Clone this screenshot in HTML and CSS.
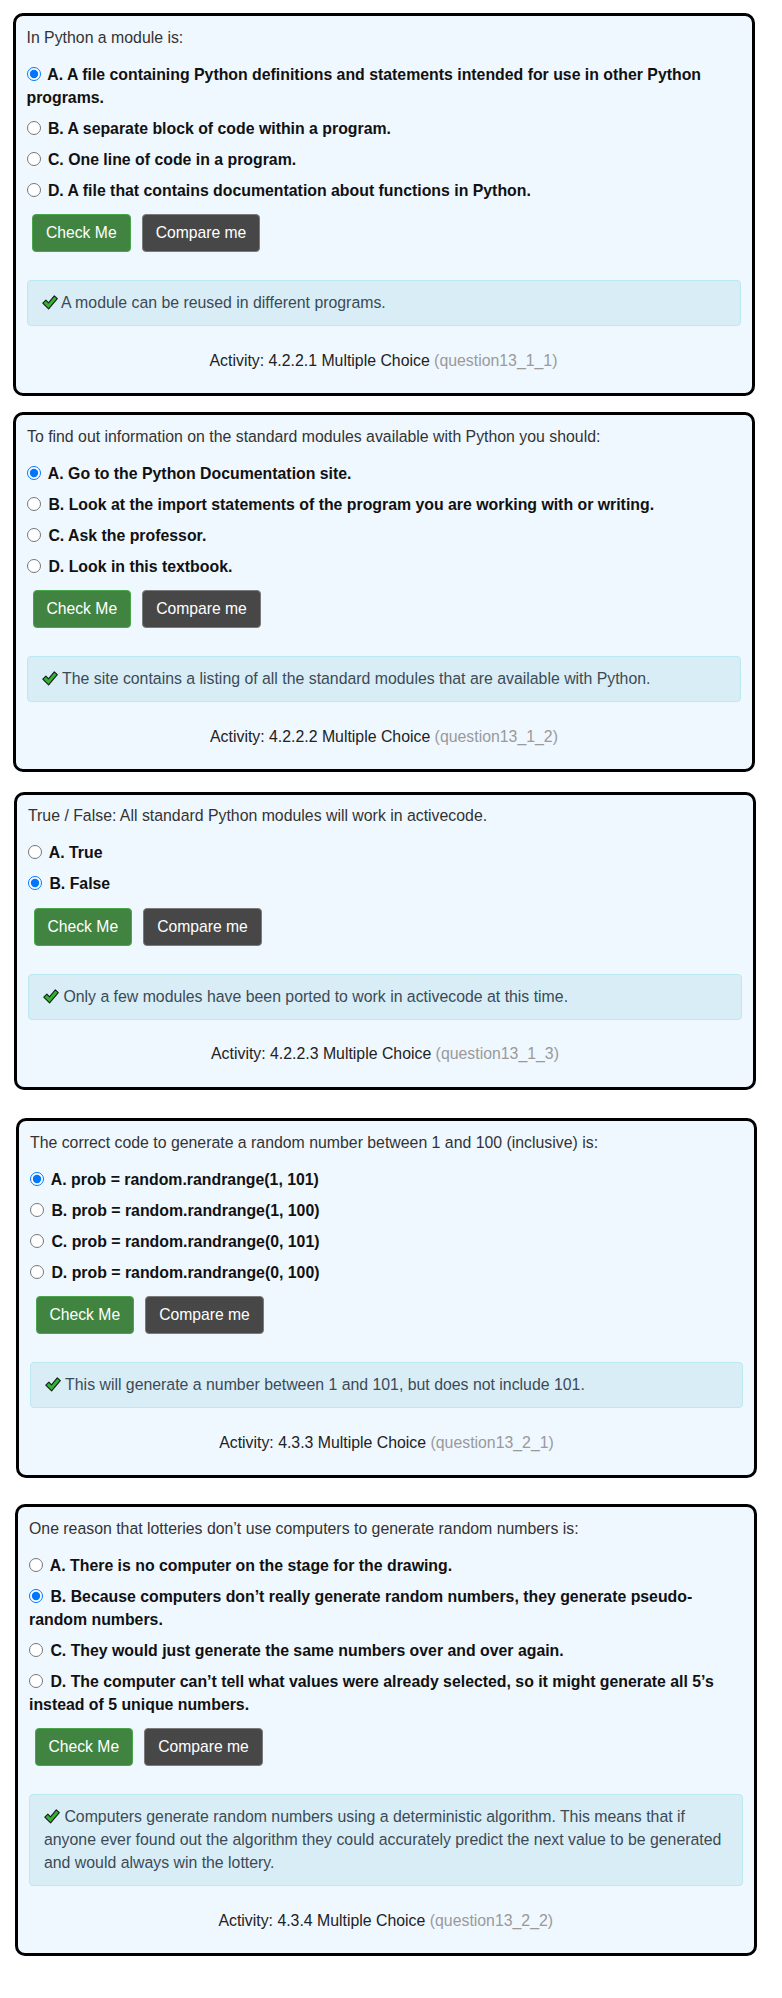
FILE: index.html
```html
<!DOCTYPE html>
<html lang="en">
<head>
<meta charset="utf-8">
<title>Multiple Choice</title>
<link rel="stylesheet" href="styles.css">
</head>
<body>
<main class="page">

<section class="mc mc-1">
  <p class="question">In Python a module is:</p>
  <div class="options">
    <label class="option"><input type="radio" name="q1" checked> A. A file containing Python definitions and statements intended for use in other Python programs.</label>
    <label class="option"><input type="radio" name="q1"> B. A separate block of code within a program.</label>
    <label class="option"><input type="radio" name="q1"> C. One line of code in a program.</label>
    <label class="option"><input type="radio" name="q1"> D. A file that contains documentation about functions in Python.</label>
  </div>
  <div class="actions">
    <button class="btn btn-check">Check Me</button>
    <button class="btn btn-compare">Compare me</button>
  </div>
  <div class="feedback"><svg class="tick" viewBox="0 0 16 15" width="16" height="15"><path d="M0.8 8.2 L3.9 5.2 L6.5 7.8 L12.3 0.9 L15.3 3.6 L6.6 13.9 Z" fill="#2fb52f" stroke="#1a1a1a" stroke-width="1.1" stroke-linejoin="round"/></svg> A module can be reused in different programs.</div>
  <p class="activity">Activity: 4.2.2.1 Multiple Choice <span class="qid">(question13_1_1)</span></p>
</section>

<section class="mc mc-2">
  <p class="question">To find out information on the standard modules available with Python you should:</p>
  <div class="options">
    <label class="option"><input type="radio" name="q2" checked> A. Go to the Python Documentation site.</label>
    <label class="option"><input type="radio" name="q2"> B. Look at the import statements of the program you are working with or writing.</label>
    <label class="option"><input type="radio" name="q2"> C. Ask the professor.</label>
    <label class="option"><input type="radio" name="q2"> D. Look in this textbook.</label>
  </div>
  <div class="actions">
    <button class="btn btn-check">Check Me</button>
    <button class="btn btn-compare">Compare me</button>
  </div>
  <div class="feedback"><svg class="tick" viewBox="0 0 16 15" width="16" height="15"><path d="M0.8 8.2 L3.9 5.2 L6.5 7.8 L12.3 0.9 L15.3 3.6 L6.6 13.9 Z" fill="#2fb52f" stroke="#1a1a1a" stroke-width="1.1" stroke-linejoin="round"/></svg> The site contains a listing of all the standard modules that are available with Python.</div>
  <p class="activity">Activity: 4.2.2.2 Multiple Choice <span class="qid">(question13_1_2)</span></p>
</section>

<section class="mc mc-3">
  <p class="question">True / False: All standard Python modules will work in activecode.</p>
  <div class="options">
    <label class="option"><input type="radio" name="q3"> A. True</label>
    <label class="option"><input type="radio" name="q3" checked> B. False</label>
  </div>
  <div class="actions">
    <button class="btn btn-check">Check Me</button>
    <button class="btn btn-compare">Compare me</button>
  </div>
  <div class="feedback"><svg class="tick" viewBox="0 0 16 15" width="16" height="15"><path d="M0.8 8.2 L3.9 5.2 L6.5 7.8 L12.3 0.9 L15.3 3.6 L6.6 13.9 Z" fill="#2fb52f" stroke="#1a1a1a" stroke-width="1.1" stroke-linejoin="round"/></svg> Only a few modules have been ported to work in activecode at this time.</div>
  <p class="activity">Activity: 4.2.2.3 Multiple Choice <span class="qid">(question13_1_3)</span></p>
</section>

<section class="mc mc-4">
  <p class="question">The correct code to generate a random number between 1 and 100 (inclusive) is:</p>
  <div class="options">
    <label class="option"><input type="radio" name="q4" checked> A. prob = random.randrange(1, 101)</label>
    <label class="option"><input type="radio" name="q4"> B. prob = random.randrange(1, 100)</label>
    <label class="option"><input type="radio" name="q4"> C. prob = random.randrange(0, 101)</label>
    <label class="option"><input type="radio" name="q4"> D. prob = random.randrange(0, 100)</label>
  </div>
  <div class="actions">
    <button class="btn btn-check">Check Me</button>
    <button class="btn btn-compare">Compare me</button>
  </div>
  <div class="feedback"><svg class="tick" viewBox="0 0 16 15" width="16" height="15"><path d="M0.8 8.2 L3.9 5.2 L6.5 7.8 L12.3 0.9 L15.3 3.6 L6.6 13.9 Z" fill="#2fb52f" stroke="#1a1a1a" stroke-width="1.1" stroke-linejoin="round"/></svg> This will generate a number between 1 and 101, but does not include 101.</div>
  <p class="activity">Activity: 4.3.3 Multiple Choice <span class="qid">(question13_2_1)</span></p>
</section>

<section class="mc mc-5">
  <p class="question">One reason that lotteries don’t use computers to generate random numbers is:</p>
  <div class="options">
    <label class="option"><input type="radio" name="q5"> A. There is no computer on the stage for the drawing.</label>
    <label class="option"><input type="radio" name="q5" checked> B. Because computers don’t really generate random numbers, they generate pseudo-random numbers.</label>
    <label class="option"><input type="radio" name="q5"> C. They would just generate the same numbers over and over again.</label>
    <label class="option"><input type="radio" name="q5"> D. The computer can’t tell what values were already selected, so it might generate all 5’s instead of 5 unique numbers.</label>
  </div>
  <div class="actions">
    <button class="btn btn-check">Check Me</button>
    <button class="btn btn-compare">Compare me</button>
  </div>
  <div class="feedback"><svg class="tick" viewBox="0 0 16 15" width="16" height="15"><path d="M0.8 8.2 L3.9 5.2 L6.5 7.8 L12.3 0.9 L15.3 3.6 L6.6 13.9 Z" fill="#2fb52f" stroke="#1a1a1a" stroke-width="1.1" stroke-linejoin="round"/></svg> Computers generate random numbers using a deterministic algorithm. This means that if anyone ever found out the algorithm they could accurately predict the next value to be generated and would always win the lottery.</div>
  <p class="activity">Activity: 4.3.4 Multiple Choice <span class="qid">(question13_2_2)</span></p>
</section>

</main>
</body>
</html>
```

FILE: styles.css
```css
html, body {
  margin: 0;
  padding: 0;
  background: #ffffff;
}

body {
  font-family: "Liberation Sans", Arial, Helvetica, sans-serif;
  font-size: 15.85px;
  line-height: 23px;
  color: #333333;
}

.page {
  padding-top: 13px;
  display: flex;
  flex-direction: column;
}

.mc {
  box-sizing: border-box;
  width: 742px;
  margin-left: 12.5px;
  border: 3px solid #000000;
  border-radius: 10px;
  background: #eff7ff;
  padding: 9.5px 11px 21.5px 11px;
}

.mc-2 { margin-top: 16px; margin-left: 13px; }
.mc-3 { margin-top: 19.5px; margin-left: 14px; }
.mc-4 { margin-top: 28.5px; margin-left: 16px; width: 741px; }
.mc-5 { margin-top: 26px; margin-left: 15px; width: 741.5px; }

.question {
  margin: 0 0 14px 0;
}

.options {
  display: flex;
  flex-direction: column;
  gap: 8px;
}

.option {
  display: block;
  font-weight: bold;
  color: #111111;
}

.option input {
  margin: 4px 3px 0 0;
  width: 14px;
  height: 14px;
  vertical-align: top;
}

.actions {
  display: flex;
  gap: 11px;
  margin-top: 12.5px;
  padding-left: 5.5px;
}

.btn {
  font-family: "Liberation Sans", Arial, Helvetica, sans-serif;
  font-size: 15.7px;
  line-height: 24px;
  padding: 6px 13px;
  border-radius: 4px;
  color: #ffffff;
  cursor: pointer;
}

.btn-check {
  background: #418442;
  border: 1px solid #4aa54a;
}

.btn-compare {
  background: #474747;
  border: 1px solid #7a7a7a;
}

.feedback {
  margin-top: 28px;
  background: #d9edf7;
  border: 1px solid #bce8f1;
  border-radius: 4px;
  padding: 10px 14px 11px 14px;
  color: #3b4a55;
}

.tick {
  vertical-align: -2px;
}

.activity {
  margin: 22.5px 0 0 0;
  text-align: center;
  color: #222222;
}

.qid {
  color: #9a9a9a;
}
```
